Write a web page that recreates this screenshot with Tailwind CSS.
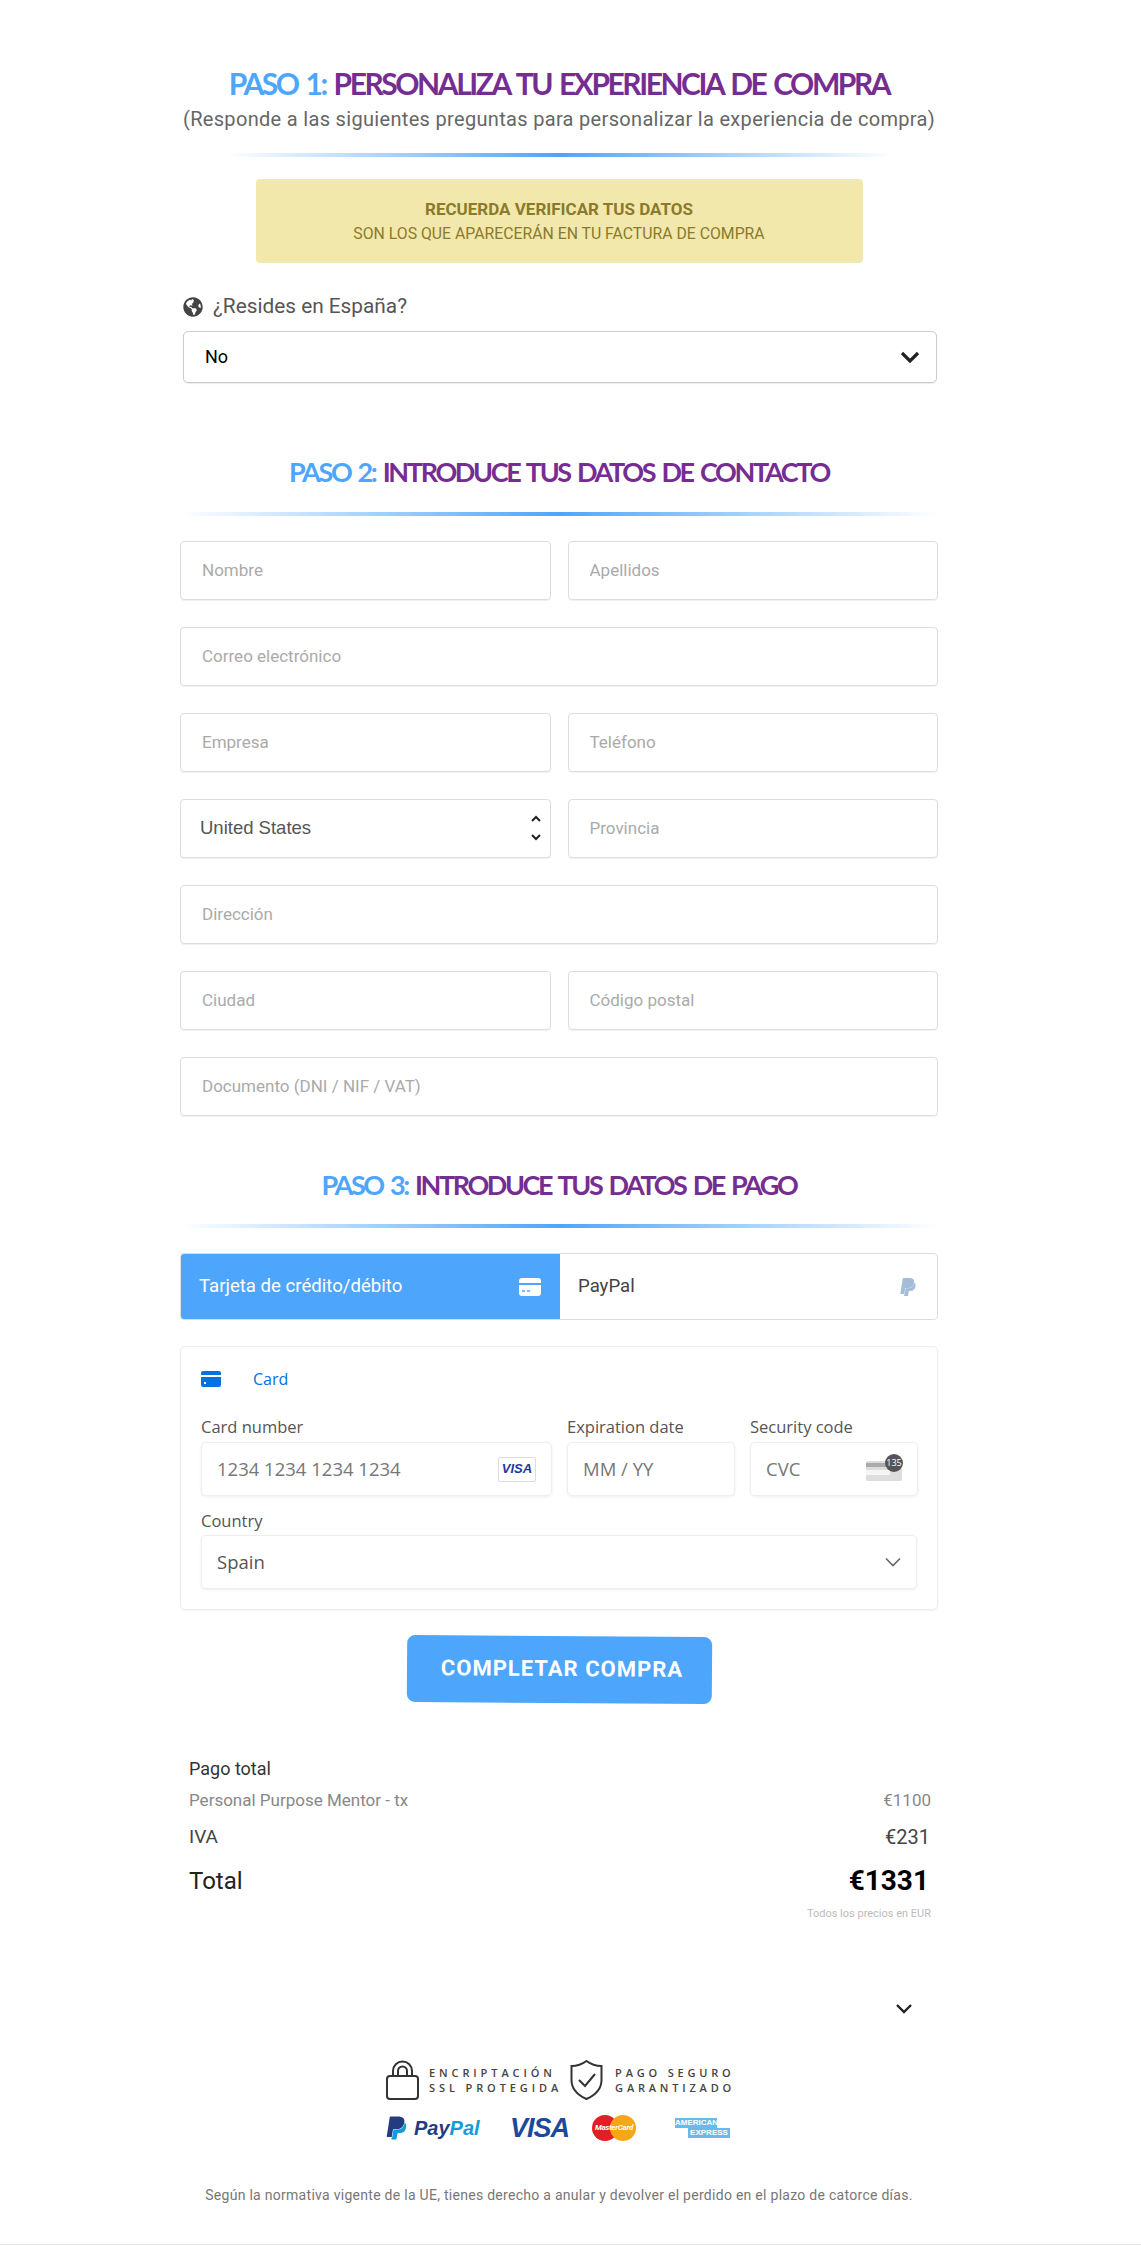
<!DOCTYPE html>
<html lang="es">
<head>
    <meta charset="UTF-8">
    <meta name="viewport" content="width=device-width, initial-scale=1.0">
    <title>Checkout</title>
    <script src="https://cdn.jsdelivr.net/npm/@tailwindcss/browser@4"></script>
</head>
<body class="bg-white font-['Roboto',sans-serif] text-[#333]">
    <div class="h-[2245px] border-b border-[#e8e8e8] pl-[180px] pt-[63px]">
        <div class="w-[758px]">
            <!-- Paso 1 -->
            <h2 class="h-[40px] text-center font-['Lato',sans-serif] text-[30px] leading-[40px] font-bold tracking-[-2.45px] [word-spacing:3px] whitespace-nowrap text-[#762d91]"><span class="text-[#4da6fb]">PASO 1:</span> PERSONALIZA TU EXPERIENCIA DE COMPRA</h2>
            <p class="mt-[2px] text-center text-[20px] leading-[28px] tracking-[0.32px] text-[#666]">(Responde a las siguientes preguntas para personalizar la experiencia de compra)</p>
            <div class="mx-auto mt-[20px] h-[4px] w-[670px] bg-linear-to-r from-transparent via-[#4da6fb] to-transparent"></div>

            <div class="mx-auto mt-[22px] flex h-[84px] w-[607px] flex-col items-center justify-center rounded-[4px] bg-[#f3e8ac] text-[#8a7a2b]">
                <p class="text-[17px] leading-[23px] font-bold">RECUERDA VERIFICAR TUS DATOS</p>
                <p class="mt-[2px] text-[15.8px] leading-[22px]">SON LOS QUE APARECERÁN EN TU FACTURA DE COMPRA</p>
            </div>

            <label class="mt-[30px] flex h-[28px] items-center gap-[10px] pl-[3px] text-[20.8px] text-[#555]">
                <svg class="h-[20px] w-[20px] fill-[#444]" viewBox="0 0 496 512"><path d="M248 8C111.03 8 0 119.03 0 256s111.03 248 248 248 248-111.03 248-248S384.97 8 248 8zm82.29 357.6c-3.9 3.88-7.99 7.95-11.31 11.28-2.99 3-5.1 6.7-6.17 10.71-1.51 5.66-2.73 11.38-4.77 16.87l-17.39 46.85c-13.76 3-28 4.69-42.65 4.69v-27.38c1.69-12.62-7.64-36.26-22.63-51.25-6-6-9.37-14.14-9.37-22.63v-32.01c0-11.64-6.27-22.34-16.46-27.97-14.37-7.95-34.81-19.06-48.81-26.11-11.48-5.78-22.1-13.14-31.65-21.75l-.8-.72a114.792 114.792 0 0 1-18.06-20.74c-9.38-13.77-24.66-36.42-34.59-51.14 20.47-45.5 57.36-82.04 103.2-101.89l24.01 12.01C203.48 89.74 216 82.01 216 70.11v-11.3c7.99-1.29 16.12-2.11 24.48-2.69l28.31 28.31c6.25 6.25 6.25 16.38 0 22.63L264 112l-10.34 10.34c-3.12 3.12-3.12 8.19 0 11.31l4.69 4.69c3.12 3.12 3.12 8.19 0 11.31l-8 8a8.008 8.008 0 0 1-5.66 2.34h-8.99c-2.08 0-4.08.81-5.58 2.27l-9.92 9.65a8.008 8.008 0 0 0-1.58 9.31l15.59 31.19c2.66 5.32-1.21 11.58-7.15 11.58h-5.64c-1.93 0-3.79-.7-5.24-1.96l-9.28-8.06a16.017 16.017 0 0 0-15.55-3.1l-31.17 10.39a11.95 11.95 0 0 0-8.17 11.34c0 4.53 2.56 8.66 6.61 10.69l11.08 5.54c9.41 4.71 19.79 7.16 30.31 7.16s22.59 27.29 32 32h66.75c8.49 0 16.62 3.37 22.63 9.37l13.69 13.69a30.503 30.503 0 0 1 8.93 21.57 46.536 46.536 0 0 1-13.72 32.98zM417 274.25c-5.79-1.45-10.84-5-14.15-9.97l-17.98-26.97a23.97 23.97 0 0 1 0-26.62l19.59-29.38c2.32-3.47 5.5-6.29 9.24-8.15l12.98-6.49C440.2 193.59 448 223.87 448 256c0 8.67-.74 17.16-1.82 25.54L417 274.25z"/></svg>
                ¿Resides en España?
            </label>
            <div class="relative mt-[10px] ml-[3px] w-[754px]">
                <select class="h-[52px] w-full appearance-none rounded-[5px] border border-[#ccc] bg-white pb-[2px] pl-[21px] text-[18px] text-black shadow-[0_1px_1px_rgba(0,0,0,0.08)]">
                    <option>No</option>
                </select>
                <svg class="pointer-events-none absolute top-[19px] right-[17px] h-[14px] w-[20px]" viewBox="0 0 20 14" fill="none" stroke="#222" stroke-width="3.2"><path d="M2 3l8 8 8-8"/></svg>
            </div>

            <!-- Paso 2 -->
            <h2 class="mt-[71px] h-[36px] text-center font-['Lato',sans-serif] text-[27px] leading-[36px] font-bold tracking-[-2.35px] [word-spacing:3px] whitespace-nowrap text-[#762d91]"><span class="text-[#4da6fb]">PASO 2:</span> INTRODUCE TUS DATOS DE CONTACTO</h2>
            <div class="mt-[22px] h-[4px] w-full bg-linear-to-r from-transparent via-[#4da6fb] to-transparent"></div>

            <form class="mt-[25px] grid grid-cols-2 gap-x-[17px] gap-y-[27px] text-[17px]">
                <input placeholder="Nombre" class="h-[59px] rounded-[4px] border border-[#ddd] pr-[20px] pb-[2px] pl-[21px] placeholder:text-[#aaa] shadow-[0_1px_1px_rgba(0,0,0,0.06)]">
                <input placeholder="Apellidos" class="h-[59px] rounded-[4px] border border-[#ddd] pr-[20px] pb-[2px] pl-[21px] placeholder:text-[#aaa] shadow-[0_1px_1px_rgba(0,0,0,0.06)]">
                <input placeholder="Correo electrónico" class="col-span-2 h-[59px] rounded-[4px] border border-[#ddd] pr-[20px] pb-[2px] pl-[21px] placeholder:text-[#aaa] shadow-[0_1px_1px_rgba(0,0,0,0.06)]">
                <input placeholder="Empresa" class="h-[59px] rounded-[4px] border border-[#ddd] pr-[20px] pb-[2px] pl-[21px] placeholder:text-[#aaa] shadow-[0_1px_1px_rgba(0,0,0,0.06)]">
                <input placeholder="Teléfono" class="h-[59px] rounded-[4px] border border-[#ddd] pr-[20px] pb-[2px] pl-[21px] placeholder:text-[#aaa] shadow-[0_1px_1px_rgba(0,0,0,0.06)]">
                <div class="relative">
                    <select class="h-[59px] w-full appearance-none rounded-[4px] border border-[#ddd] bg-white pb-[2px] pl-[19px] font-['Liberation_Sans',sans-serif] text-[18.5px] text-[#555] shadow-[0_1px_1px_rgba(0,0,0,0.06)]">
                        <option>United States</option>
                    </select>
                    <svg class="pointer-events-none absolute top-[13px] right-[8px] h-[32px] w-[14px]" viewBox="0 0 14 32" fill="none" stroke="#222" stroke-width="2"><path d="M3 9l4-4 4 4M3 23l4 4 4-4"/></svg>
                </div>
                <input placeholder="Provincia" class="h-[59px] rounded-[4px] border border-[#ddd] pr-[20px] pb-[2px] pl-[21px] placeholder:text-[#aaa] shadow-[0_1px_1px_rgba(0,0,0,0.06)]">
                <input placeholder="Dirección" class="col-span-2 h-[59px] rounded-[4px] border border-[#ddd] pr-[20px] pb-[2px] pl-[21px] placeholder:text-[#aaa] shadow-[0_1px_1px_rgba(0,0,0,0.06)]">
                <input placeholder="Ciudad" class="h-[59px] rounded-[4px] border border-[#ddd] pr-[20px] pb-[2px] pl-[21px] placeholder:text-[#aaa] shadow-[0_1px_1px_rgba(0,0,0,0.06)]">
                <input placeholder="Código postal" class="h-[59px] rounded-[4px] border border-[#ddd] pr-[20px] pb-[2px] pl-[21px] placeholder:text-[#aaa] shadow-[0_1px_1px_rgba(0,0,0,0.06)]">
                <input placeholder="Documento (DNI / NIF / VAT)" class="col-span-2 h-[59px] rounded-[4px] border border-[#ddd] pr-[20px] pb-[2px] pl-[21px] placeholder:text-[#aaa] shadow-[0_1px_1px_rgba(0,0,0,0.06)]">
            </form>

            <!-- Paso 3 -->
            <h2 class="mt-[51px] h-[36px] text-center font-['Lato',sans-serif] text-[27px] leading-[36px] font-bold tracking-[-2.4px] [word-spacing:3px] whitespace-nowrap text-[#762d91]"><span class="text-[#4da6fb]">PASO 3:</span> INTRODUCE TUS DATOS DE PAGO</h2>
            <div class="mt-[21px] h-[4px] w-full bg-linear-to-r from-transparent via-[#4da6fb] to-transparent"></div>

            <div class="mt-[25px] flex h-[67px] overflow-hidden rounded-[4px] border border-[#ddd] text-[18.6px]">
                <div class="-m-px flex w-[380px] items-center justify-between bg-[#4da6fb] pr-[19px] pl-[19px] text-white">
                    Tarjeta de crédito/débito
                    <svg class="h-[18px] w-[22px]" viewBox="0 0 22 18"><path fill="#fff" d="M3 0h16a3 3 0 0 1 3 3v2H0V3a3 3 0 0 1 3-3zM0 7h22v8a3 3 0 0 1-3 3H3a3 3 0 0 1-3-3z"/><path stroke="#4da6fb" stroke-width="1.4" d="M3 13h3M8 13h3"/></svg>
                </div>
                <div class="flex flex-1 items-center justify-between pr-[20px] pl-[19px] text-[#444]">
                    PayPal
                    <svg class="h-[18px] w-[18px] fill-[#a4bdd6]" viewBox="0 0 24 24"><path d="M7.076 21.337H2.47a.641.641 0 0 1-.633-.74L4.944.901C5.026.382 5.474 0 5.998 0h7.46c2.57 0 4.578.543 5.69 1.81 1.01 1.15 1.304 2.42 1.012 4.287-.023.143-.047.288-.077.437-.983 5.05-4.349 6.797-8.647 6.797h-2.19c-.524 0-.968.382-1.05.9l-1.12 7.106zm14.146-14.42a3.35 3.35 0 0 0-.607-.541c-.013.076-.026.175-.041.254-.93 4.778-4.005 7.201-9.138 7.201h-2.19a.563.563 0 0 0-.556.479l-1.187 7.527h-.506l-.24 1.516a.56.56 0 0 0 .554.647h3.882c.46 0 .85-.334.922-.788.06-.26.76-4.852.816-5.09a.932.932 0 0 1 .923-.788h.58c3.76 0 6.705-1.528 7.565-5.946.36-1.847.174-3.388-.777-4.471z"/></svg>
                </div>
            </div>

            <!-- Stripe card -->
            <div class="mt-[26px] h-[264px] rounded-[5px] border border-[#eee] px-[20px] pt-[23px] font-['Open_Sans',sans-serif] shadow-[0_1px_2px_rgba(0,0,0,0.05)]">
                <div class="flex h-[18px] items-center gap-[32px] text-[16px] font-medium text-[#0570de]">
                    <svg class="h-[16px] w-[20px]" viewBox="0 0 20 16"><path fill="#0570de" d="M2 0h16a2 2 0 0 1 2 2v2H0V2a2 2 0 0 1 2-2zM0 6h20v8a2 2 0 0 1-2 2H2a2 2 0 0 1-2-2zm3 5v2h2v-2z"/></svg>
                    Card
                </div>
                <div class="mt-[28px] grid grid-cols-[351px_168px_168px] gap-x-[15px] text-[16.5px] text-[#555]">
                    <div>
                        <p class="h-[21px] leading-[21px]">Card number</p>
                        <div class="mt-[5px] flex h-[54px] items-center justify-between rounded-[5px] border border-[#eee] pr-[15px] pl-[15px] shadow-[0_1px_3px_rgba(0,0,0,0.07)]">
                            <span class="text-[18.5px] text-[#777]">1234 1234 1234 1234</span>
                            <span class="flex h-[25px] w-[38px] items-center justify-center rounded-[2px] border border-[#ddd] font-['Liberation_Sans',sans-serif] text-[13px] font-bold text-[#1a3a9c] italic">VISA</span>
                        </div>
                    </div>
                    <div>
                        <p class="h-[21px] leading-[21px]">Expiration date</p>
                        <div class="mt-[5px] flex h-[54px] items-center rounded-[5px] border border-[#eee] pl-[15px] shadow-[0_1px_3px_rgba(0,0,0,0.07)]">
                            <span class="text-[18.5px] text-[#777]">MM / YY</span>
                        </div>
                    </div>
                    <div>
                        <p class="h-[21px] leading-[21px]">Security code</p>
                        <div class="mt-[5px] flex h-[54px] items-center justify-between rounded-[5px] border border-[#eee] pr-[15px] pl-[15px] shadow-[0_1px_3px_rgba(0,0,0,0.07)]">
                            <span class="text-[18.5px] text-[#777]">CVC</span>
                            <div class="relative h-[24px] w-[36px]">
                                <div class="absolute top-[4px] left-0 h-[20px] w-[36px] rounded-[2px] bg-[#ddd]"></div>
                                <div class="absolute top-[6px] left-0 h-[4px] w-[36px] bg-[#aaa]"></div>
                                <div class="absolute top-[13px] left-0 h-[5px] w-[24px] bg-[#f5f5f5]"></div>
                                <div class="absolute -top-[3px] -right-[1px] flex h-[18px] w-[18px] items-center justify-center rounded-full bg-[#555] text-[9px] text-white">135</div>
                            </div>
                        </div>
                    </div>
                </div>
                <p class="mt-[14px] h-[21px] text-[16.5px] leading-[21px] text-[#555]">Country</p>
                <div class="mt-[4px] flex h-[54px] items-center justify-between rounded-[5px] border border-[#eee] pr-[15px] pl-[15px] text-[18.5px] text-[#555] shadow-[0_1px_3px_rgba(0,0,0,0.07)]">
                    Spain
                    <svg class="h-[10px] w-[16px]" viewBox="0 0 16 10" fill="none" stroke="#666" stroke-width="1.6"><path d="M1 1.500l7 7 7-7"/></svg>
                </div>
            </div>

            <button class="mx-auto mt-[26px] flex h-[67px] w-[305px] rotate-[0.4deg] items-center justify-center rounded-[8px] bg-[#4da6fb] pb-[2px] pl-[5px] text-[22px] font-bold tracking-[1px] text-white">COMPLETAR COMPRA</button>

            <!-- Resumen -->
            <div class="mt-[54px] pr-[7px] pl-[9px]">
                <p class="h-[24px] text-[18px] leading-[24px] text-[#333]">Pago total</p>
                <div class="mt-[8px] flex h-[24px] items-center justify-between text-[17px] text-[#888]"><span>Personal Purpose Mentor - tx</span><span>€1100</span></div>
                <div class="mt-[12px] flex h-[24px] items-center justify-between text-[19px] text-[#444]"><span>IVA</span><span class="pr-px text-[20px]">€231</span></div>
                <div class="mt-[14px] flex h-[36px] items-center justify-between text-[24px] text-[#222]"><span>Total</span><span class="pr-[2px] text-[28px] font-bold text-black">€1331</span></div>
                <p class="mt-[8px] h-[14px] text-right text-[11px] leading-[14px] text-[#bbb]">Todos los precios en EUR</p>
            </div>

            <div class="mt-[82px] flex justify-end pr-[25px]">
                <svg class="h-[12px] w-[18px]" viewBox="0 0 18 12" fill="none" stroke="#222" stroke-width="2.4"><path d="M2 2l7 7 7-7"/></svg>
            </div>

            <!-- Sellos -->
            <div class="mt-[45px] flex justify-center gap-[8px] pl-[3px]">
                <div class="flex items-center gap-[10px]">
                    <svg class="h-[40px] w-[33px]" viewBox="0 0 33 40" fill="none" stroke="#333" stroke-width="2"><rect x="1" y="16" width="31" height="23" rx="3"/><path d="M7 16V11a9.500 9.500 0 0 1 19 0v5M12 16v-5a4.500 4.500 0 0 1 9 0v5"/></svg>
                    <p class="font-['Open_Sans',sans-serif] text-[11px] leading-[15px] font-semibold tracking-[3.9px] whitespace-nowrap text-[#444]">ENCRIPTACIÓN<br>SSL PROTEGIDA</p>
                </div>
                <div class="flex items-center gap-[12px]">
                    <svg class="h-[40px] w-[33px]" viewBox="0 0 33 40" fill="none" stroke="#333" stroke-width="2"><path d="M16.500 1c4 3 9 5 15 5v14c0 9-6 15-15 19C7.500 35 1.500 29 1.500 20V6c6 0 11-2 15-5z"/><path d="M9 20l6 6 10-12"/></svg>
                    <p class="font-['Open_Sans',sans-serif] text-[11px] leading-[15px] font-semibold tracking-[3.8px] whitespace-nowrap text-[#444]">PAGO SEGURO<br>GARANTIZADO</p>
                </div>
            </div>

            <div class="mt-[14px] flex h-[28px] items-center pl-[205px]">
                <div class="flex w-[125px] items-center gap-[6px]">
                    <svg class="h-[24px] w-[23px]" viewBox="0 0 24 24"><path fill="#253b80" d="M7.076 21.337H2.47a.641.641 0 0 1-.633-.74L4.944.901C5.026.382 5.474 0 5.998 0h7.46c2.57 0 4.578.543 5.69 1.81 1.01 1.15 1.304 2.42 1.012 4.287-.023.143-.047.288-.077.437-.983 5.05-4.349 6.797-8.647 6.797h-2.19c-.524 0-.968.382-1.05.9l-1.12 7.106z"/><path fill="#179bd7" d="M21.222 6.917a3.35 3.35 0 0 0-.607-.541c-.013.076-.026.175-.041.254-.93 4.778-4.005 7.201-9.138 7.201h-2.19a.563.563 0 0 0-.556.479l-1.187 7.527h-.506l-.24 1.516a.56.56 0 0 0 .554.647h3.882c.46 0 .85-.334.922-.788.06-.26.76-4.852.816-5.09a.932.932 0 0 1 .923-.788h.58c3.76 0 6.705-1.528 7.565-5.946.36-1.847.174-3.388-.777-4.471z"/></svg>
                    <span class="font-['Liberation_Sans',sans-serif] text-[20px] font-bold italic"><span class="text-[#253b80]">Pay</span><span class="text-[#179bd7]">Pal</span></span>
                </div>
                <span class="w-[82px] font-['Liberation_Sans',sans-serif] text-[27px] font-bold tracking-[-1px] text-[#1a4a9c] italic">VISA</span>
                <div class="relative h-[26px] w-[44px]">
                    <div class="absolute top-0 left-0 h-[26px] w-[26px] rounded-full bg-[#e01f26]"></div>
                    <div class="absolute top-0 right-0 h-[26px] w-[26px] rounded-full bg-[#f9a51a]"></div>
                    <div class="absolute inset-0 flex items-center justify-center text-[8px] font-bold tracking-[-0.3px] text-white italic">MasterCard</div>
                </div>
                <div class="ml-[39px] flex flex-col font-['Liberation_Sans',sans-serif] text-[8px] leading-[10px] font-bold text-white">
                    <span class="w-[42px] bg-[#6bb9ea] text-center">AMERICAN</span>
                    <span class="ml-[13px] w-[42px] bg-[#6bb9ea] text-center">EXPRESS</span>
                </div>
            </div>

            <p class="mt-[43px] h-[20px] text-center text-[14px] leading-[20px] tracking-[0.28px] text-[#777]">Según la normativa vigente de la UE, tienes derecho a anular y devolver el perdido en el plazo de catorce días.</p>
        </div>
    </div>
</body>
</html>
